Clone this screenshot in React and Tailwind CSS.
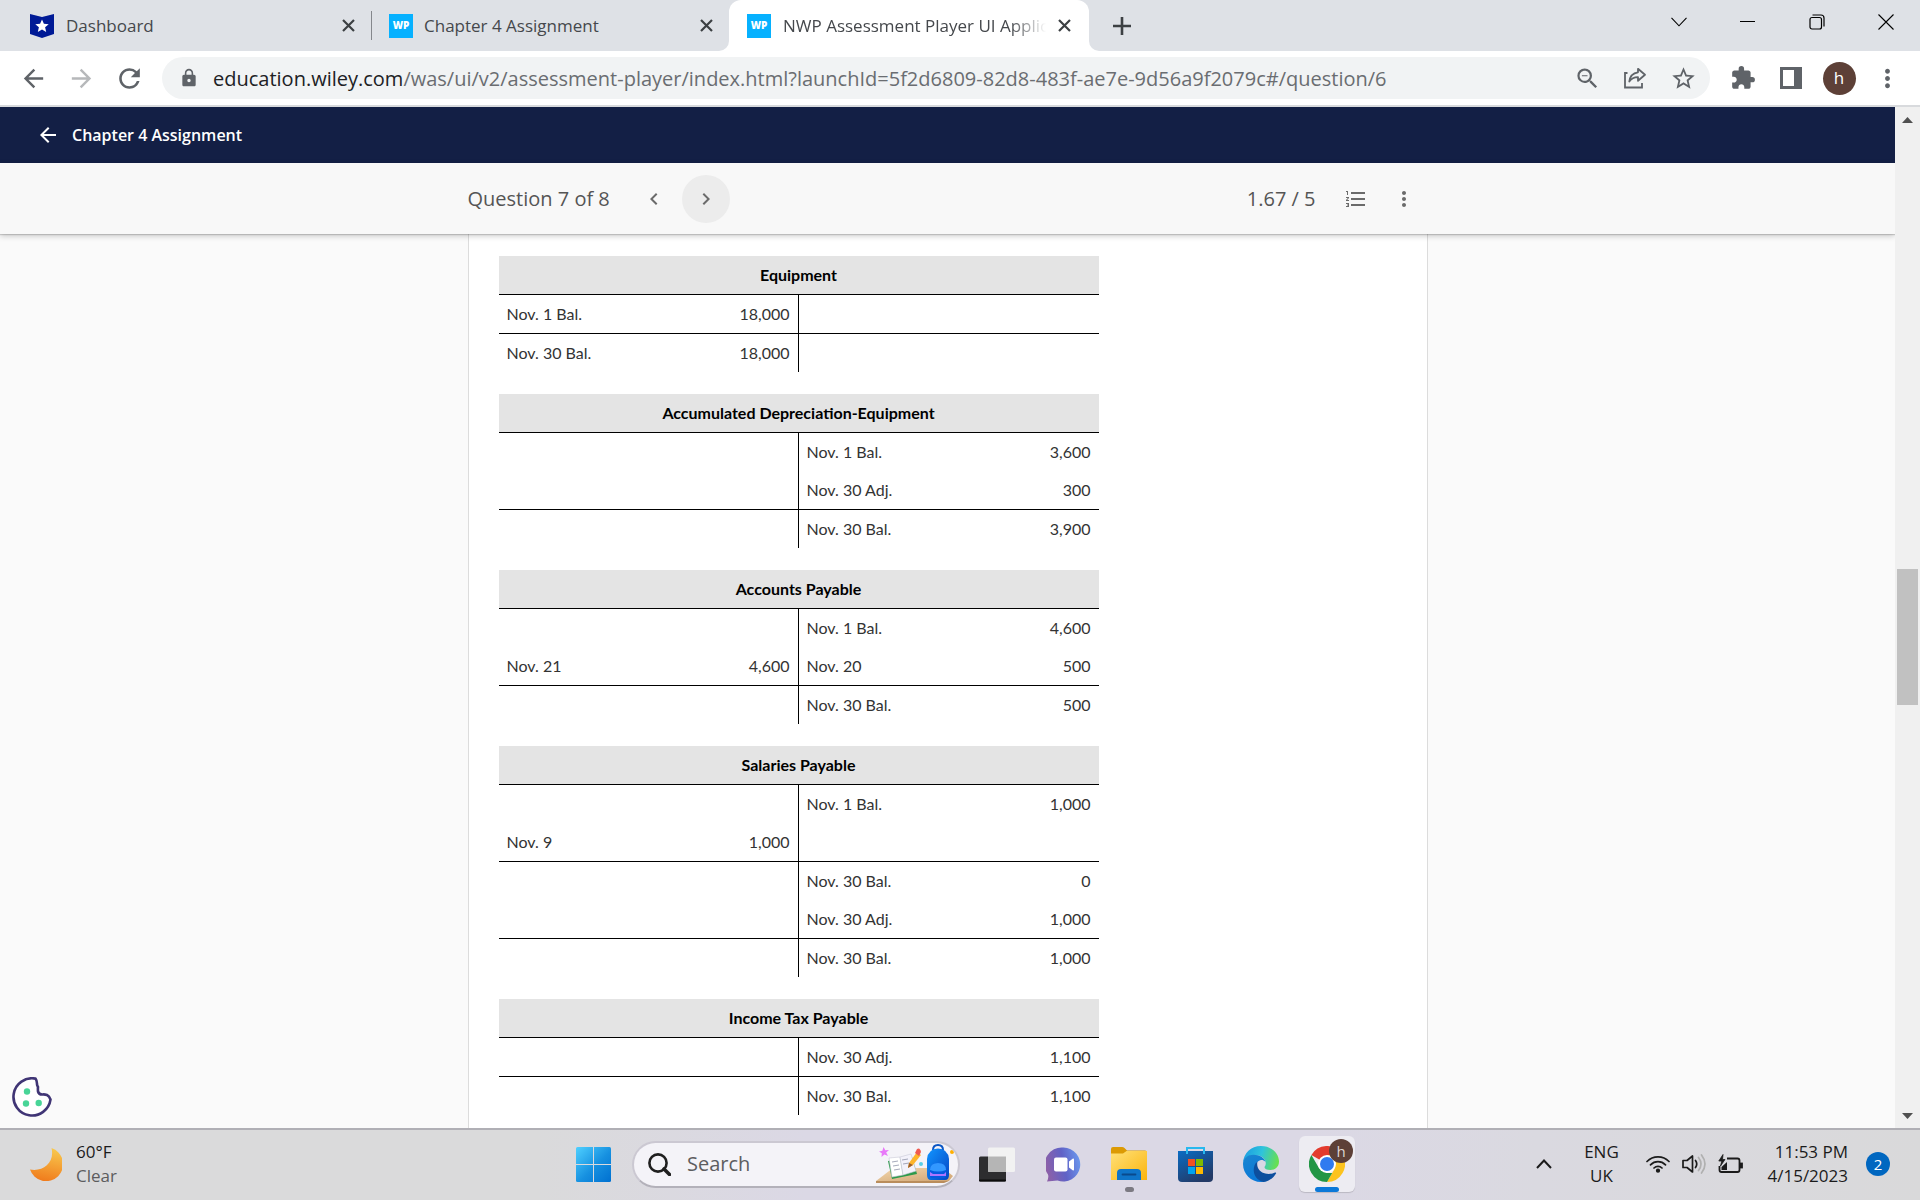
import React from "react";
import {
  MdArrowBack,
  MdArrowForward,
  MdRefresh,
  MdLock,
  MdOutlineZoomOut,
  MdStarBorder,
  MdExtension,
  MdMoreVert,
  MdFormatListNumbered,
  MdChevronLeft,
  MdChevronRight,
} from "react-icons/md";

const accounts = [
  {
    name: "Equipment",
    rows: [
      { cells: ["Nov. 1 Bal.", "18,000", "", ""], line: true },
      { cells: ["Nov. 30 Bal.", "18,000", "", ""] },
    ],
  },
  {
    name: "Accumulated Depreciation-Equipment",
    rows: [
      { cells: ["", "", "Nov. 1 Bal.", "3,600"] },
      { cells: ["", "", "Nov. 30 Adj.", "300"], line: true },
      { cells: ["", "", "Nov. 30 Bal.", "3,900"] },
    ],
  },
  {
    name: "Accounts Payable",
    rows: [
      { cells: ["", "", "Nov. 1 Bal.", "4,600"] },
      { cells: ["Nov. 21", "4,600", "Nov. 20", "500"], line: true },
      { cells: ["", "", "Nov. 30 Bal.", "500"] },
    ],
  },
  {
    name: "Salaries Payable",
    rows: [
      { cells: ["", "", "Nov. 1 Bal.", "1,000"] },
      { cells: ["Nov. 9", "1,000", "", ""], line: true },
      { cells: ["", "", "Nov. 30 Bal.", "0"] },
      { cells: ["", "", "Nov. 30 Adj.", "1,000"], line: true },
      { cells: ["", "", "Nov. 30 Bal.", "1,000"] },
    ],
  },
  {
    name: "Income Tax Payable",
    rows: [
      { cells: ["", "", "Nov. 30 Adj.", "1,100"], line: true },
      { cells: ["", "", "Nov. 30 Bal.", "1,100"] },
    ],
  },
];

function CloseGlyph() {
  return (
    <svg width="13" height="13" viewBox="0 0 13 13" stroke="#3c4043" strokeWidth="2.200" fill="none">
      <path d="M1 1l11 11M12 1L1 12" />
    </svg>
  );
}

function WpIcon() {
  return (
    <span className="flex size-6 shrink-0 items-center justify-center bg-[#06b1ff] text-[10px] font-extrabold text-white">
      WP
    </span>
  );
}

function ShieldIcon() {
  return (
    <svg width="24" height="24" viewBox="0 0 24 24" className="shrink-0">
      <path d="M0 0l12 3L24 0v20l-12 4L0 20z" fill="#001a96" />
      <path d="M12 5.400l1.900 4.400 4.800.4-3.600 3.100 1.100 4.700-4.200-2.500L7.800 18l1.100-4.700-3.600-3.100 4.800-.4z" fill="#fff" />
    </svg>
  );
}

function TabStrip() {
  return (
    <div className="flex h-[51px] shrink-0 items-stretch bg-[#dee1e6] text-[17px] text-[#45484c]">
      <div className="flex w-[371px] shrink-0 items-center pr-4 pl-[30px]">
        <ShieldIcon />
        <span className="ml-3 flex-1">Dashboard</span>
        <button aria-label="Close Dashboard"><CloseGlyph /></button>
      </div>
      <div className="h-[29px] w-px shrink-0 self-center bg-[#84878c]" />
      <div className="flex w-[357px] shrink-0 items-center pr-4 pl-[17px]">
        <WpIcon />
        <span className="ml-[11px] flex-1">Chapter 4 Assignment</span>
        <button aria-label="Close Chapter 4 Assignment"><CloseGlyph /></button>
      </div>
      <div className="relative flex w-[360px] shrink-0 items-center rounded-t-xl bg-white px-[18px]">
        <span className="absolute bottom-0 -left-[10px] size-[10px] bg-white">
          <span className="block size-[10px] rounded-br-[10px] bg-[#dee1e6]" />
        </span>
        <span className="absolute -right-[10px] bottom-0 size-[10px] bg-white">
          <span className="block size-[10px] rounded-bl-[10px] bg-[#dee1e6]" />
        </span>
        <WpIcon />
        <span className="ml-3 w-[263px] overflow-hidden whitespace-nowrap [mask-image:linear-gradient(to_right,black_calc(100%-36px),transparent)]">
          NWP Assessment Player UI Application
        </span>
        <button aria-label="Close NWP Assessment Player" className="ml-auto"><CloseGlyph /></button>
      </div>
      <button aria-label="New tab" className="flex w-[66px] items-center justify-center">
        <svg width="18" height="18" viewBox="0 0 18 18" stroke="#3c4043" strokeWidth="2.600"><path d="M9 0v18M0 9h18" /></svg>
      </button>
      <div className="ml-auto flex h-[43px] text-black">
        <button aria-label="Search tabs" className="flex w-[69px] items-center justify-center">
          <svg width="16" height="10" viewBox="0 0 16 10" fill="none" stroke="currentColor" strokeWidth="1.100"><path d="M.5.8L8 8.800 15.500.8" /></svg>
        </button>
        <button aria-label="Minimize" className="flex w-[69px] items-center justify-center">
          <span className="h-px w-[15px] bg-black" />
        </button>
        <button aria-label="Restore" className="flex w-[69px] items-center justify-center">
          <svg width="16" height="16" viewBox="0 0 16 16" fill="none" stroke="currentColor" strokeWidth="1.200">
            <rect x="1" y="3.500" width="11.500" height="11.500" rx="2" />
            <path d="M3.500 1h8.500a3 3 0 013 3v8.500" />
          </svg>
        </button>
        <button aria-label="Close window" className="flex w-[69px] items-center justify-center">
          <svg width="16" height="16" viewBox="0 0 16 16" stroke="currentColor" strokeWidth="1.100"><path d="M.5.5l15 15M15.500.5l-15 15" /></svg>
        </button>
      </div>
    </div>
  );
}

function BarButton({ label, children }) {
  return (
    <button aria-label={label} className="flex h-10 w-12 shrink-0 items-center justify-center text-[#5f6368]">
      {children}
    </button>
  );
}

function Toolbar() {
  return (
    <div className="flex h-14 shrink-0 items-center border-b-2 border-[#d8dadd] bg-white px-[9px]">
      <BarButton label="Back"><MdArrowBack size={29} /></BarButton>
      <span className="flex opacity-45"><BarButton label="Forward"><MdArrowForward size={29} /></BarButton></span>
      <BarButton label="Reload"><MdRefresh size={31} /></BarButton>
      <div className="ml-[9px] flex h-[42px] min-w-0 flex-1 items-center rounded-full bg-[#f1f3f4] pr-[3px] pl-[17px]">
        <MdLock size={20} className="shrink-0 text-[#5f6368]" />
        <div className="ml-[14px] min-w-0 flex-1 truncate pt-[2px] text-[20px] leading-7 text-[#6a6d71]">
          <span className="text-[#202124]">education.wiley.com</span>/was/ui/v2/assessment-player/index.html?launchId=5f2d6809-82d8-483f-ae7e-9d56a9f2079c#/question/6
        </div>
        <BarButton label="Zoom"><MdOutlineZoomOut size={27} /></BarButton>
        <BarButton label="Share">
          <svg width="24" height="22" viewBox="0 0 24 22" fill="none" stroke="currentColor" strokeWidth="1.800">
            <path d="M4.500 6H2v14.500h17V16" />
            <path d="M15 1.800l7 6-7 6v-3.600c-4 0-6.700 1.300-8.700 4.300.6-5 3.700-8.500 8.700-9.200z" strokeLinejoin="round" />
          </svg>
        </BarButton>
        <BarButton label="Bookmark"><MdStarBorder size={27} /></BarButton>
      </div>
      <div className="ml-[9px] flex items-center">
        <BarButton label="Extensions"><MdExtension size={26} /></BarButton>
        <BarButton label="Side panel">
          <svg width="22" height="22" viewBox="0 0 22 22" fill="currentColor"><path fillRule="evenodd" d="M0 0h22v22H0zM3 3v16h11V3z" /></svg>
        </BarButton>
        <BarButton label="Profile">
          <span className="flex size-[33px] items-center justify-center rounded-full bg-[#5d4037] text-[17px] text-white">h</span>
        </BarButton>
        <BarButton label="Menu"><MdMoreVert size={29} /></BarButton>
      </div>
    </div>
  );
}

function QuestionBar() {
  return (
    <div className="relative z-10 shrink-0 bg-[#f8f8f8] shadow-[0_1px_1px_rgba(0,0,0,0.15),0_2px_6px_rgba(0,0,0,0.2)]">
      <div className="mx-auto flex h-[71px] max-w-[960px] items-center text-[20px] text-[#555]">
        <h2 className="w-[162px] whitespace-nowrap">Question 7 of 8</h2>
        <button aria-label="Previous question" className="flex size-12 items-center justify-center rounded-full text-[#6b6b6b]">
          <MdChevronLeft size={24} />
        </button>
        <button aria-label="Next question" className="ml-1 flex size-12 items-center justify-center rounded-full bg-[#ececec] text-[#6b6b6b]">
          <MdChevronRight size={24} />
        </button>
        <span className="ml-auto">1.67 / 5</span>
        <button aria-label="Question list" className="ml-4 flex size-12 items-center justify-center text-[#6b6b6b]">
          <MdFormatListNumbered size={24} />
        </button>
        <button aria-label="More options" className="flex size-12 items-center justify-center text-[#6b6b6b]">
          <MdMoreVert size={24} />
        </button>
      </div>
    </div>
  );
}

function TAccount({ name, rows }) {
  return (
    <table className="w-full max-w-[600px] table-fixed border-separate border-spacing-0 text-[16px] leading-6 text-[#333]">
      <thead>
        <tr>
          <th colSpan={4} className="h-[39px] border-b border-black bg-[#e4e4e4] p-0 text-center font-bold text-black">
            {name}
          </th>
        </tr>
      </thead>
      <tbody>
        {rows.map((row, r) => (
          <tr key={r}>
            {row.cells.map((text, c) => (
              <td
                key={c}
                className={
                  (row.line ? "h-[39px] border-b " : "h-[38px] ") +
                  (c === 1 ? "border-r " : "") +
                  (c % 2 ? "text-right " : "text-left ") +
                  "border-black px-2 py-0"
                }
              >
                {text}
              </td>
            ))}
          </tr>
        ))}
      </tbody>
    </table>
  );
}

function CookieIcon() {
  return (
    <svg width="40" height="40" viewBox="0 0 40 40">
      <path
        d="M23.500 1.600A18.600 18.600 0 1038.500 22.500q-1.200-3.500-3.500-4.500-2.500-.8-4.500-.5-3.500.2-4.500-3-.2-2.500 0-4.500-1.200-1.800-1-3.500-.2-3-1.500-4.900z"
        fill="#fff" stroke="#403575" strokeWidth="2.600" strokeLinejoin="round"
      />
      <circle cx="15" cy="14.500" r="3.200" fill="#48d597" />
      <circle cx="14" cy="26.500" r="3.200" fill="#48d597" />
      <circle cx="26.700" cy="26" r="3.200" fill="#48d597" />
    </svg>
  );
}

function Scrollbar() {
  return (
    <div className="flex w-[25px] shrink-0 flex-col items-center bg-[#f0f0f0]">
      <button aria-label="Scroll up" className="flex size-[25px] items-center justify-center">
        <svg width="11" height="6" viewBox="0 0 11 6" fill="#505050"><path d="M0 6l5.500-6L11 6z" /></svg>
      </button>
      <div className="flex-[437]" />
      <div className="h-[136px] w-[21px] bg-[#c1c1c1]" />
      <div className="flex-[398]" />
      <button aria-label="Scroll down" className="flex size-[25px] items-center justify-center">
        <svg width="11" height="6" viewBox="0 0 11 6" fill="#505050"><path d="M0 0l5.500 6L11 0z" /></svg>
      </button>
    </div>
  );
}

function Page() {
  return (
    <div className="flex min-h-0 flex-1">
      <div className="relative flex min-w-0 flex-1 flex-col overflow-hidden bg-[#fafafa]">
        <div className="flex h-14 shrink-0 items-center bg-[#131f45] pl-9 text-white">
          <button aria-label="Back to assignment"><MdArrowBack size={24} /></button>
          <h1 className="ml-3 text-[16px] font-semibold">Chapter 4 Assignment</h1>
        </div>
        <QuestionBar />
        <div className="min-h-0 flex-1 overflow-hidden">
          <main className="mx-auto flex min-h-full max-w-[960px] flex-col gap-[22px] border-x border-[#dcdcdc] bg-white px-[30px] py-[22px] font-['Lato',sans-serif]">
            {accounts.map((a) => (
              <TAccount key={a.name} {...a} />
            ))}
          </main>
        </div>
        <button aria-label="Cookie preferences" className="absolute bottom-[11px] left-3"><CookieIcon /></button>
      </div>
      <Scrollbar />
    </div>
  );
}

function StartIcon() {
  return (
    <svg width="35" height="35" viewBox="0 0 35 35">
      <defs>
        <linearGradient id="start" x1="0" y1="0" x2="35" y2="35" gradientUnits="userSpaceOnUse">
          <stop offset="0" stopColor="#4fd0ff" />
          <stop offset=".55" stopColor="#1690e0" />
          <stop offset="1" stopColor="#0070d0" />
        </linearGradient>
      </defs>
      <g fill="url(#start)">
        <path d="M1.500 0H17v17H0V1.500A1.500 1.500 0 011.500 0z" />
        <path d="M18 0h15.500A1.500 1.500 0 0135 1.500V17H18z" />
        <path d="M0 18h17v17H1.500A1.500 1.500 0 010 33.500z" />
        <path d="M18 18h17v15.500a1.500 1.500 0 01-1.500 1.500H18z" />
      </g>
    </svg>
  );
}

function SchoolArt() {
  return (
    <svg width="82" height="40" viewBox="0 0 82 40" className="shrink-0">
      <defs>
        <linearGradient id="desk" x1="0" y1="0" x2="1" y2="1"><stop offset="0" stopColor="#f3d7ae" /><stop offset="1" stopColor="#cfa472" /></linearGradient>
        <linearGradient id="bag" x1="0" y1="0" x2="1" y2="1"><stop offset="0" stopColor="#1195ff" /><stop offset="1" stopColor="#0546c4" /></linearGradient>
      </defs>
      <path d="M0 37l17-13h50l10 8-4 5z" fill="url(#desk)" />
      <path d="M0 37h73l-5 2H0z" fill="#b98d5c" />
      <path d="M12 17l4 18 25-5-5-17z" fill="#2c9a4b" />
      <path d="M13 14l11-1 3 18-11 2z" fill="#fff" stroke="#c9c9d6" strokeWidth=".6" />
      <path d="M24 13l11-3 5 17-13 4z" fill="#f3f2fb" stroke="#c9c9d6" strokeWidth=".6" />
      <path d="M16 18l6-1m-5 5l6-1m-5 5l6-1m2-9l6-1m-5 5l6-1" stroke="#8f93a8" strokeWidth=".8" />
      <path d="M32 24l1-5L41 8l4 3-8 10z" fill="#fdb52a" />
      <path d="M32 24l1-5 4 2z" fill="#9a5c2c" />
      <path d="M39 9l2-4q3-2 4 3l-2 4z" fill="#ef5a50" />
      <path d="M7.500 3l1.800 3.200L13 6l-2.800 2.600L12 12l-3.600-1.400L5.500 13l.3-3.700L3 7.500l3.400-.8z" fill="#e879f9" />
      <path d="M57 6q0-5 5-5t5 5" fill="none" stroke="#0b55c4" strokeWidth="2" />
      <path d="M51 15q1-10 11-10.500Q72 5 73 15v16q0 5-4 5H55q-4 0-4-5z" fill="url(#bag)" />
      <path d="M54 26q0-7 8-7t8 7v6q0 2-2 2H56q-2 0-2-2z" fill="#075ae0" />
      <path d="M54 26q0-7 8-7t8 7q-8 3-16 0z" fill="#3298ff" />
      <path d="M54 28l3 2h11l2-2v4H54z" fill="#ad75ff" />
      <circle cx="45" cy="20" r="2" fill="#59cfe8" />
      <circle cx="76" cy="8" r="2" fill="#ffb000" />
    </svg>
  );
}

function TaskViewIcon() {
  return (
    <svg width="36" height="35" viewBox="0 0 36 35">
      <rect x="0" y="9.500" width="27" height="25" rx="1.500" fill="#2d2d2f" />
      <rect x="0" y="32.500" width="27" height="2" rx="1" fill="#0c0c0c" />
      <rect x="9" y=".5" width="27" height="24.500" rx="1.500" fill="#f2f2f2" />
      <path d="M9 9.500h18V25H10.500A1.500 1.500 0 019 23.500z" fill="#b5b5b5" />
    </svg>
  );
}

function ChatIcon() {
  return (
    <svg width="35" height="35" viewBox="0 0 35 35">
      <defs>
        <linearGradient id="chat" x1="0" y1=".4" x2="1" y2=".2"><stop offset="0" stopColor="#8d60a8" /><stop offset=".5" stopColor="#6062c6" /><stop offset="1" stopColor="#6b9bf0" /></linearGradient>
      </defs>
      <path d="M17.500.5a17 17 0 11-6 33L1 34.500q2-4 1-7A17 17 0 0117.500.5z" fill="url(#chat)" />
      <rect x="8" y="10.500" width="13.500" height="14" rx="2" fill="#fff" />
      <path d="M23 14.500l4-3q1-.3 1 1v10q0 1.300-1 1l-4-3z" fill="#fff" />
    </svg>
  );
}

function FolderIcon() {
  return (
    <svg width="36" height="34" viewBox="0 0 36 34">
      <defs>
        <linearGradient id="fold" x1="0" y1="0" x2="1" y2="1"><stop offset="0" stopColor="#ffe17a" /><stop offset="1" stopColor="#fbb40c" /></linearGradient>
      </defs>
      <path d="M0 2q0-2 2-2h9q1.500 0 2.500 1L16 3.500h18q2 0 2 2V12H0z" fill="#dc9a04" />
      <path d="M0 6.500h12L15.500 4H36v29H0z" fill="url(#fold)" />
      <path d="M6 33v-7q0-4 4-4h16q4 0 4 4v7z" fill="#0f75c9" />
      <path d="M11.500 27.500h13" stroke="#0a4a8c" strokeWidth="1.800" strokeLinecap="round" />
    </svg>
  );
}

function StoreIcon() {
  return (
    <svg width="35" height="35" viewBox="0 0 35 35">
      <defs>
        <linearGradient id="store" x1="0" y1="0" x2=".6" y2="1"><stop offset="0" stopColor="#0a6cc4" /><stop offset="1" stopColor="#233a66" /></linearGradient>
      </defs>
      <path d="M0 4h35v27q0 4-4 4H4q-4 0-4-4z" fill="url(#store)" />
      <path d="M9 7V1h17v6" fill="none" stroke="#28b8ee" strokeWidth="2" />
      <path d="M10 12h7v7h-7z" fill="#f25022" />
      <path d="M18 12h7v7h-7z" fill="#7fba00" />
      <path d="M10 20h7v7h-7z" fill="#00a4ef" />
      <path d="M18 20h7v7h-7z" fill="#ffb900" />
    </svg>
  );
}

function EdgeIcon() {
  return (
    <svg width="36" height="36" viewBox="0 0 36 36">
      <defs>
        <linearGradient id="edgeTop" x1="0" y1=".3" x2="1" y2=".5"><stop offset="0" stopColor="#1b9de2" /><stop offset=".5" stopColor="#2fc3dc" /><stop offset="1" stopColor="#68e04f" /></linearGradient>
        <linearGradient id="edgeLeft" x1="0" y1="0" x2=".5" y2="1"><stop offset="0" stopColor="#1a86d0" /><stop offset="1" stopColor="#0a78d8" /></linearGradient>
      </defs>
      <path d="M0 17C.5 7 8 0 18 0c10.500 0 18 7.500 18 15.500 0 5.500-4 8.500-8.500 8.500-4 0-6-1.300-6-2.700 0-1 1.300-1.300 1.300-4C22.800 13 18.500 9 12 9 5 9 1 13 0 17z" fill="url(#edgeTop)" />
      <path d="M0 18C0 12 5 8.700 10.500 8.700c6.500 0 11 3.300 12 7-1.500-1.400-3-1.900-4.500-1.700-4 .6-7 5-5.500 11 1.500 6 6.500 9.500 11.500 10-2 .7-4 1-6 1C8 36 0 28 0 18z" fill="url(#edgeLeft)" />
      <path d="M14.500 15.500C8.500 20 9 33 20.500 35.900c5.500-.5 10-3.900 12.500-8.400.4-.9-.2-1.300-1-.9-6.500 3-14.500.9-17-4.600-1-2.500-1-4.500-.5-6.500z" fill="#0d4f9e" />
    </svg>
  );
}

function ChromeIcon() {
  return (
    <svg width="36" height="36" viewBox="0 0 36 36">
      <path d="M18 18L2.400 9A18 18 0 0133.600 9z" fill="#e33b2e" />
      <path d="M18 9h15.600A18 18 0 0118 36l7.800-13.500z" fill="#fcc31e" />
      <path d="M2.400 9l7.800 13.500L18 27h5.200L18 36A18 18 0 012.400 9z" fill="#229645" />
      <circle cx="18" cy="18" r="9" fill="#fff" />
      <circle cx="18" cy="18" r="7" fill="#2f7bf0" />
    </svg>
  );
}

function TaskButton({ label, children }) {
  return (
    <button aria-label={label} className="relative flex h-14 w-[66px] shrink-0 items-center justify-center">
      {children}
    </button>
  );
}

function Taskbar() {
  return (
    <footer className="grid h-[72px] shrink-0 grid-cols-[1fr_auto_1fr] items-center border-t-2 border-[#b0afb5] bg-[linear-gradient(to_right,#dadadb_0%,#dadadb_28%,#dbd8e5_42%,#dbd8e5_68%,#dad9e0_80%,#d9d9da_100%)] pb-[2px] text-[17px] leading-6">
      <button className="flex items-center gap-[14px] justify-self-start pl-[30px] text-left">
        <svg width="32" height="33" viewBox="0 0 32 33">
          <defs>
            <linearGradient id="moon" x1=".6" y1="0" x2=".4" y2="1"><stop offset="0" stopColor="#f8c84e" /><stop offset="1" stopColor="#f07b1c" /></linearGradient>
          </defs>
          <path d="M21.500 0A17 17 0 1 1 0 21.500C13 24 25 15 21.500 0z" fill="url(#moon)" />
        </svg>
        <span className="flex flex-col">
          <span className="text-[#1b1b1b]">60°F</span>
          <span className="text-[#5c5c5e]">Clear</span>
        </span>
      </button>

      <div className="flex items-center">
        <TaskButton label="Start"><StartIcon /></TaskButton>
        <label className="mr-1 ml-[6px] flex h-[47px] w-[328px] items-center overflow-hidden rounded-full border-2 border-[#cbc8d2] border-b-[#b3b1ba] bg-[#f4f3f8] pl-[14px]">
          <svg width="23" height="23" viewBox="0 0 23 23" fill="none" stroke="#1f1f1f" strokeWidth="2.600" className="shrink-0">
            <circle cx="10" cy="10" r="8.600" />
            <path d="M16 16l5.500 5.500" strokeWidth="3.600" strokeLinecap="round" />
          </svg>
          <input type="text" aria-label="Search" placeholder="Search" className="ml-4 min-w-0 flex-1 bg-transparent text-[20px] leading-7 outline-none placeholder:text-[#5d5d60]" />
          <SchoolArt />
        </label>
        <TaskButton label="Task view"><TaskViewIcon /></TaskButton>
        <TaskButton label="Chat"><ChatIcon /></TaskButton>
        <TaskButton label="File Explorer">
          <FolderIcon />
          <span className="absolute bottom-0 h-[5px] w-[9px] rounded-full bg-[#7c7a82]" />
        </TaskButton>
        <TaskButton label="Microsoft Store"><StoreIcon /></TaskButton>
        <TaskButton label="Edge"><EdgeIcon /></TaskButton>
        <TaskButton label="Chrome">
          <span className="flex size-14 items-center justify-center rounded-md bg-[#edecf2] shadow-[0_1px_1px_rgba(0,0,0,0.15)]"><ChromeIcon /></span>
          <span className="absolute top-[3px] right-[7px] flex size-6 items-center justify-center rounded-full bg-[#5d4037] text-[15px] text-[#ddd5d2]">h</span>
          <span className="absolute bottom-0 h-[5px] w-6 rounded-full bg-[#0b78d8]" />
        </TaskButton>
      </div>

      <div className="flex items-center justify-self-end pr-[30px] text-[#1b1b1b]">
        <button aria-label="Show hidden icons" className="flex h-12 w-9 items-center justify-center">
          <svg width="16" height="10" viewBox="0 0 16 10" fill="none" stroke="currentColor" strokeWidth="2"><path d="M1 9l7-7.500L15 9" /></svg>
        </button>
        <button className="ml-[14px] flex w-[50px] flex-col items-center"><span>ENG</span><span>UK</span></button>
        <button aria-label="Network, sound and battery" className="ml-5 flex items-center gap-3">
          <svg width="24" height="18" viewBox="0 0 24 18" fill="none" stroke="currentColor" strokeWidth="1.700" strokeLinecap="round">
            <path d="M1 6.500a15.500 15.500 0 0122 0M4.500 9.800a10.600 10.600 0 0115 0M8 13a5.700 5.700 0 018 0" />
            <circle cx="12" cy="15.700" r="1.300" fill="currentColor" />
          </svg>
          <svg width="24" height="20" viewBox="0 0 24 20" fill="none" stroke="currentColor" strokeWidth="1.700" strokeLinejoin="round" strokeLinecap="round">
            <path d="M1 6.500h4L10.500 2v16L5 13.500H1z" />
            <path d="M13.500 6.500q2.500 3.500 0 7" />
            <path d="M16.500 3.500q5 6.500 0 13M19.500 1q7 9 0 18" stroke="#b0b0b0" />
          </svg>
          <svg width="25" height="20" viewBox="0 0 25 20" fill="none" stroke="currentColor" strokeWidth="1.800">
            <path d="M9 4.500h10.500q2 0 2 2v9.500q0 2-2 2h-16q-2 0-2-2v-4" />
            <path d="M22.500 9.500h1.500v4h-1.500z" fill="currentColor" />
            <path d="M5 .5L.8 7h3L2.500 12 7 5.500H4.500z" fill="currentColor" strokeWidth=".8" />
            <path d="M3.500 16v-3L9 8v8z" fill="currentColor" stroke="none" />
          </svg>
        </button>
        <button className="ml-6 flex flex-col items-end whitespace-nowrap"><span>11:53 PM</span><span>4/15/2023</span></button>
        <span className="ml-[18px] flex size-6 items-center justify-center rounded-full bg-[#0067c0] text-[15px] text-white">2</span>
      </div>
    </footer>
  );
}

export default function App() {
  return (
    <div className="flex h-screen flex-col overflow-hidden font-['Open_Sans',sans-serif]">
      <TabStrip />
      <Toolbar />
      <Page />
      <Taskbar />
    </div>
  );
}
